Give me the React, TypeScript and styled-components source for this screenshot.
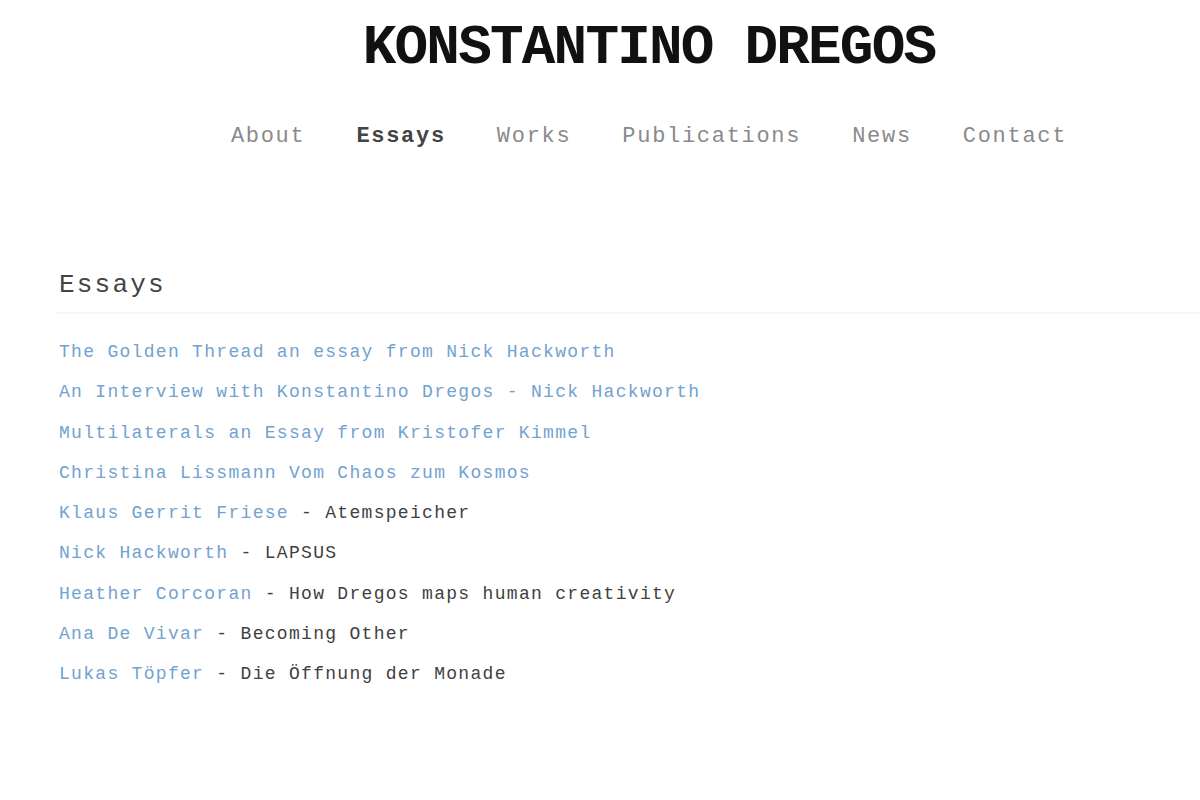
import React from "react";
import styled, { createGlobalStyle } from "styled-components";

const GlobalStyle = createGlobalStyle`
  html, body { margin: 0; padding: 0; background: #fff; }
  body { font-family: "Liberation Mono", "Courier New", monospace; }
`;

const Page = styled.div`
  width: 1200px;
  min-height: 800px;
  background: #fff;
`;

const Header = styled.header`
  display: flex;
  flex-direction: column;
  align-items: center;
  padding: 20px 0 0 98px;
`;

const Title = styled.h1`
  margin: 0;
  font-family: "Liberation Mono", "Courier New", monospace;
  font-weight: 700;
  font-size: 56px;
  line-height: 56px;
  letter-spacing: -1.8px;
  color: #111;
  white-space: nowrap;
`;

const Nav = styled.nav`
  display: flex;
  gap: 51px;
  margin-top: 46px;
`;

const NavItem = styled.a<{ $active?: boolean }>`
  font-size: 22px;
  line-height: 30px;
  letter-spacing: 1.7px;
  color: ${(p) => (p.$active ? "#444" : "#8a8a8a")};
  font-weight: ${(p) => (p.$active ? 700 : 400)};
  text-decoration: none;
`;

const Section = styled.section`
  margin-top: 116px;
  padding-left: 55px;
`;

const Heading = styled.h2`
  margin: 0;
  padding: 0 0 10px 4px;
  font-weight: 400;
  font-size: 26px;
  line-height: 34px;
  letter-spacing: 2.2px;
  color: #444;
  border-bottom: 2px solid #f6f6f6;
`;

const List = styled.ul`
  list-style: none;
  margin: 18px 0 0;
  padding: 0 0 0 4px;
`;

const Item = styled.li`
  font-size: 18px;
  line-height: 40.3px;
  letter-spacing: 1.3px;
  color: #3f3f3f;
  white-space: nowrap;
`;

const Link = styled.a`
  color: #72a2d0;
  text-decoration: none;
`;

const navItems = ["About", "Essays", "Works", "Publications", "News", "Contact"];

const essays: { link: string; rest?: string }[] = [
  { link: "The Golden Thread an essay from Nick Hackworth" },
  { link: "An Interview with Konstantino Dregos - Nick Hackworth" },
  { link: "Multilaterals an Essay from Kristofer Kimmel" },
  { link: "Christina Lissmann Vom Chaos zum Kosmos" },
  { link: "Klaus Gerrit Friese", rest: " - Atemspeicher" },
  { link: "Nick Hackworth", rest: " - LAPSUS" },
  { link: "Heather Corcoran", rest: " - How Dregos maps human creativity" },
  { link: "Ana De Vivar", rest: " - Becoming Other" },
  { link: "Lukas Töpfer", rest: " - Die Öffnung der Monade" },
];

export default function App() {
  return (
    <Page>
      <GlobalStyle />
      <Header>
        <Title>KONSTANTINO DREGOS</Title>
        <Nav>
          {navItems.map((n) => (
            <NavItem key={n} href="#" $active={n === "Essays"}>
              {n}
            </NavItem>
          ))}
        </Nav>
      </Header>
      <Section>
        <Heading>Essays</Heading>
        <List>
          {essays.map((e) => (
            <Item key={e.link}>
              <Link href="#">{e.link}</Link>
              {e.rest}
            </Item>
          ))}
        </List>
      </Section>
    </Page>
  );
}
